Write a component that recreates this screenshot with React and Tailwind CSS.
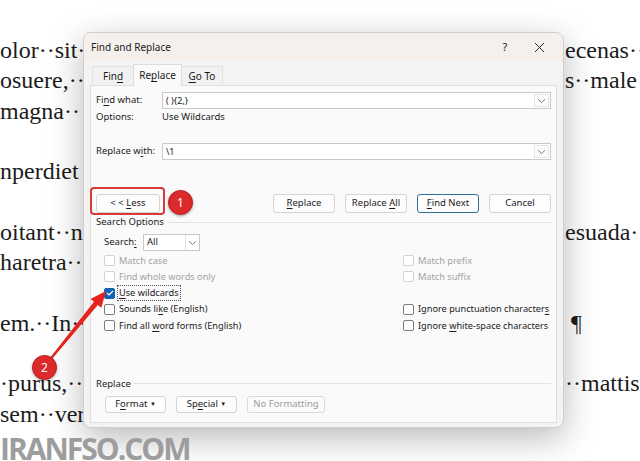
import React from "react";

const UI = { fontFamily: '"Noto Sans", "Open Sans", sans-serif' };
const SERIF = { fontFamily: '"Liberation Serif", "Times New Roman", serif' };

function U({ children }) {
  return <span className="underline underline-offset-[1.5px]">{children}</span>;
}

function Chevron({ className = "" }) {
  return (
    <svg width="9" height="6" viewBox="0 0 9 6" className={className}>
      <path d="M1 1.2 L4.5 4.6 L8 1.2" fill="none" stroke="#6b6b6b" strokeWidth="0.9" />
    </svg>
  );
}

function Combo({ value }) {
  return (
    <div className="flex-1 h-[17px] bg-white border border-[#c9c9c9] flex items-center">
      <span className="flex-1 pl-[3px] text-[9px] text-[#1a1a1a] whitespace-pre">{value}</span>
      <span className="w-[15px] h-[13px] mr-[1px] flex items-center justify-center border border-[#e6e6e6] bg-[#fbfbfb]">
        <Chevron />
      </span>
    </div>
  );
}

function Btn({ children, w, className = "" }) {
  return (
    <div
      className={`h-[19px] ${w} shrink-0 flex items-center justify-center rounded-[3px] bg-[#fdfdfd] border border-[#d3d3d3] text-[9.5px] text-[#1b1b1b] ${className}`}
    >
      <span className="whitespace-pre">{children}</span>
    </div>
  );
}

function Cb({ checked, disabled }) {
  if (checked) {
    return (
      <span className="w-[11px] h-[11px] rounded-[2px] bg-[#1261b6] border border-[#1261b6] flex items-center justify-center shrink-0">
        <svg width="8" height="6" viewBox="0 0 8 6">
          <path d="M1 3 L3 5 L7 1" fill="none" stroke="white" strokeWidth="1.1" />
        </svg>
      </span>
    );
  }
  return (
    <span
      className={`w-[11px] h-[11px] rounded-[2px] bg-white border shrink-0 ${
        disabled ? "border-[#d2d2d2]" : "border-[#7d7d7d]"
      }`}
    />
  );
}

function Opt({ children, checked, disabled, focus }) {
  return (
    <div className="h-[16.25px] flex items-center whitespace-nowrap">
      <Cb checked={checked} disabled={disabled} />
      <span
        className={`ml-[3px] text-[9.2px] whitespace-pre ${disabled ? "text-[#a3a3a3]" : "text-[#1b1b1b]"} ${
          focus ? "outline outline-1 outline-dotted outline-[#555] px-[1px]" : "px-[1px]"
        }`}
      >
        {children}
      </span>
    </div>
  );
}

function Dialog() {
  return (
    <div
      style={UI}
      className="absolute left-[83px] top-[32px] w-[481px] h-[396px] rounded-[8px] bg-[#f3f3f3] border border-[#cfcfcf] shadow-[0_10px_34px_rgba(0,0,0,0.28)] flex flex-col px-[6px] overflow-hidden"
    >
      {/* title bar */}
      <div className="h-[28px] -mx-[6px] px-[7px] flex items-center bg-[#f6f0ed] text-[10px] text-[#1a1a1a]">
        <span className="flex-1">Find and Replace</span>
        <span className="w-[20px] text-center text-[11px] mr-[19px]">?</span>
        <svg width="11" height="11" viewBox="0 0 11 11" className="mr-[11px]">
          <path d="M1 1 L10 10 M10 1 L1 10" stroke="#2a2a2a" strokeWidth="1" />
        </svg>
      </div>
      {/* tabs */}
      <div className="h-[22px] mt-[2px] flex items-end pl-[2px] text-[10px] text-[#1a1a1a]">
        <div className="h-[19px] w-[41px] flex items-center justify-center border-t border-l border-[#e2e2e2] bg-[#f1f1f1]">
          <span>
            Fin<U>d</U>
          </span>
        </div>
        <div className="h-[22px] w-[49px] flex items-center justify-center border-t border-l border-r border-[#dcdcdc] bg-[#fafafa] relative -mb-[1px] z-10">
          <span>
            Re<U>p</U>lace
          </span>
        </div>
        <div className="h-[19px] w-[41px] flex items-center justify-center border-t border-r border-[#e2e2e2] bg-[#f1f1f1]">
          <span className="whitespace-pre">
            <U>G</U>o To
          </span>
        </div>
      </div>
      {/* panel */}
      <div className="h-[338px] bg-[#fafafa] border border-[#dfdfdf] pl-[5px] pr-[5px] flex flex-col text-[9.5px] text-[#1b1b1b]">
        <div className="mt-[6px] flex items-center">
          <span className="w-[66px]">
            Fi<U>n</U>d what:
          </span>
          <Combo value="( ){2,}" />
        </div>
        <div className="h-[14px] mt-[1px] flex items-center">
          <span className="w-[66px]">Options:</span>
          <span>Use Wildcards</span>
        </div>
        <div className="mt-[19px] flex items-center">
          <span className="w-[66px] whitespace-pre">
            Replace w<U>i</U>th:
          </span>
          <Combo value="\1" />
        </div>
        <div className="mt-[34px] flex items-center">
          <Btn w="w-[64px]">
            {"< < "}
            <U>L</U>ess
          </Btn>
          <div className="flex-1" />
          <div className="flex gap-[10px]">
            <Btn w="w-[62px]">
              <U>R</U>eplace
            </Btn>
            <Btn w="w-[62px]">
              {"Replace "}
              <U>A</U>ll
            </Btn>
            <Btn w="w-[62px]" className="!border-[#2f6f96]">
              <U>F</U>ind Next
            </Btn>
            <Btn w="w-[62px]">Cancel</Btn>
          </div>
        </div>
        <div className="h-[14px] mt-[2px] flex items-center">
          <span>Search Options</span>
          <span className="flex-1 ml-[3px] h-px bg-[#e2e2e2]" />
        </div>
        <div className="mt-[5px] pl-[8px] flex items-center">
          <span className="w-[39px]">
            Search<U>:</U>
          </span>
          <div className="w-[57px] h-[17px] bg-white border border-[#c9c9c9] flex items-center">
            <span className="flex-1 pl-[3px]">All</span>
            <span className="w-[14px] h-[15px] border-l border-[#e3e3e3] flex items-center justify-center">
              <Chevron />
            </span>
          </div>
        </div>
        <div className="mt-[1.5px] pl-[8px] grid grid-cols-[299px_1fr]">
          <div className="flex flex-col">
            <Opt disabled>Match case</Opt>
            <Opt disabled>Find whole words only</Opt>
            <Opt checked focus>
              <U>U</U>se wildcards
            </Opt>
            <Opt>
              Sounds li<U>k</U>e (English)
            </Opt>
            <Opt>
              {"Find all "}
              <U>w</U>ord forms (English)
            </Opt>
          </div>
          <div className="flex flex-col">
            <Opt disabled>Match prefix</Opt>
            <Opt disabled>Match suffix</Opt>
            <div className="h-[16.25px]" />
            <Opt>
              Ignore punctuation character<U>s</U>
            </Opt>
            <Opt>
              {"Ignore "}
              <U>w</U>hite-space characters
            </Opt>
          </div>
        </div>
        <div className="h-[14px] mt-[43px] flex items-center">
          <span>Replace</span>
          <span className="flex-1 ml-[3px] h-px bg-[#e2e2e2]" />
        </div>
        <div className="mt-[5px] pl-[9px] flex items-center gap-[10px]">
          <div className="w-[61px] h-[17px] flex items-center justify-center rounded-[3px] bg-[#fdfdfd] border border-[#d3d3d3]">
            <span className="whitespace-pre">
              F<U>o</U>rmat <span className="text-[6px] align-middle">▼</span>
            </span>
          </div>
          <div className="w-[61px] h-[17px] flex items-center justify-center rounded-[3px] bg-[#fdfdfd] border border-[#d3d3d3]">
            <span className="whitespace-pre">
              Sp<U>e</U>cial <span className="text-[6px] align-middle">▼</span>
            </span>
          </div>
          <div className="w-[78px] h-[17px] flex items-center justify-center rounded-[3px] bg-[#fbfbfb] border border-[#dadada] text-[#9b9b9b]">
            No Formatting
          </div>
        </div>
      </div>
    </div>
  );
}

const lines = [
  ["olor··sit··", "ecenas··"],
  ["osuere,··", "s··male"],
  ["magna··", ""],
  ["", ""],
  ["nperdiet", ""],
  ["", ""],
  ["oitant··n", "esuada·"],
  ["haretra··", ""],
  ["", ""],
  ["em.··In··", " ¶"],
  ["", ""],
  ["·purus,··", "··mattis"],
  ["sem··ver", ""],
];

function Badge({ n, className }) {
  return (
    <div
      style={UI}
      className={`absolute w-[25px] h-[25px] rounded-full bg-[#dc2a2c] border border-[#b81d20] shadow-[0_1px_3px_rgba(0,0,0,0.35)] flex items-center justify-center text-white text-[12px] ${className}`}
    >
      {n}
    </div>
  );
}

export default function App() {
  return (
    <div className="relative w-[640px] h-[461px] overflow-hidden bg-white">
      <div style={SERIF} className="pt-[35px] text-[24px] leading-[30px] text-[#1c1c1c]">
        {lines.map(([l, r], i) => (
          <div key={i} className="h-[30.3px] flex whitespace-pre">
            <div className="w-[563px] shrink-0 overflow-hidden">{l}</div>
            <div className="pl-[2px]">{r}</div>
          </div>
        ))}
      </div>

      <Dialog />

      {/* highlight box around Less */}
      <div className="absolute left-[90px] top-[187px] w-[75px] h-[28px] rounded-[4px] border-2 border-[#d8393b]" />
      <Badge n="1" className="left-[168px] top-[190px]" />

      {/* arrow */}
      <svg className="absolute left-0 top-0" width="640" height="461">
        <polygon
          points="43.2,366.4 94,301.8 90.5,299 106,291 101.3,307.8 97.8,305 44.8,367.6"
          fill="#e5221e"
        />
      </svg>
      <Badge n="2" className="left-[32px] top-[355px]" />

      <div
        style={{ fontFamily: '"Open Sans", "Noto Sans", sans-serif' }}
        className="absolute left-[0px] top-[429px] text-[30px] font-bold tracking-[-2px] text-[#9d9d9d] leading-[40px] whitespace-nowrap"
      >
        IRANFSO.COM
      </div>
    </div>
  );
}
